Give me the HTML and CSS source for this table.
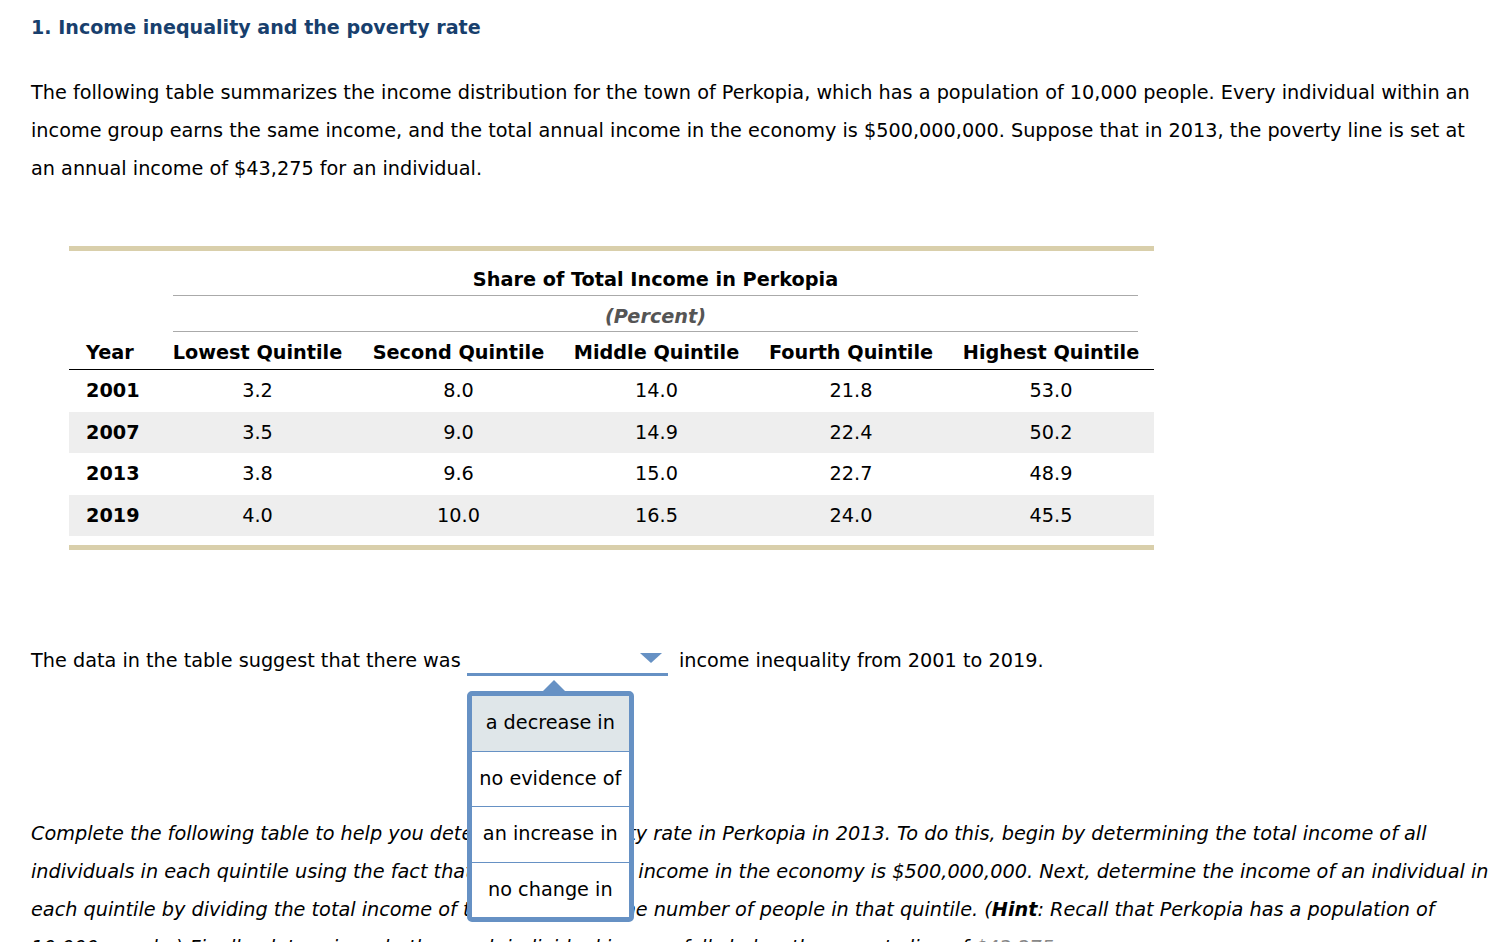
FILE: index.html
```html
<!DOCTYPE html>
<html lang="en">
<head>
<meta charset="utf-8">
<title>Income inequality and the poverty rate</title>
<link rel="stylesheet" href="styles.css">
</head>
<body>
<main class="page">
  <h1 class="title">1. Income inequality and the poverty rate</h1>
  <p class="intro">The following table summarizes the income distribution for the town of Perkopia, which has a population of 10,000 people. Every individual within an income group earns the same income, and the total annual income in the economy is $500,000,000. Suppose that in 2013, the poverty line is set at an annual income of $43,275 for an individual.</p>

  <div class="table-wrap">
    <table class="data">
      <colgroup>
        <col class="c-year"><col class="c-low"><col class="c-second"><col class="c-mid"><col class="c-fourth"><col class="c-high">
      </colgroup>
      <thead>
        <tr>
          <th></th>
          <th colspan="5" class="grp"><div class="grp-line grp-title">Share of Total Income in Perkopia</div></th>
        </tr>
        <tr>
          <th></th>
          <th colspan="5" class="grp"><div class="grp-line grp-unit">(Percent)</div></th>
        </tr>
        <tr class="cols">
          <th class="year-h">Year</th>
          <th>Lowest Quintile</th>
          <th>Second Quintile</th>
          <th>Middle Quintile</th>
          <th>Fourth Quintile</th>
          <th>Highest Quintile</th>
        </tr>
      </thead>
      <tbody>
        <tr><th class="year">2001</th><td>3.2</td><td>8.0</td><td>14.0</td><td>21.8</td><td>53.0</td></tr>
        <tr class="alt"><th class="year">2007</th><td>3.5</td><td>9.0</td><td>14.9</td><td>22.4</td><td>50.2</td></tr>
        <tr><th class="year">2013</th><td>3.8</td><td>9.6</td><td>15.0</td><td>22.7</td><td>48.9</td></tr>
        <tr class="alt"><th class="year">2019</th><td>4.0</td><td>10.0</td><td>16.5</td><td>24.0</td><td>45.5</td></tr>
      </tbody>
    </table>
  </div>

  <p class="question">The data in the table suggest that there was <span class="select"><span class="select-arrow"></span><span class="menu"><span class="menu-item is-active">a decrease in</span><span class="menu-item">no evidence of</span><span class="menu-item">an increase in</span><span class="menu-item">no change in</span></span></span> income inequality from 2001 to 2019.</p>

  <p class="instructions">Complete the following table to help you determine the poverty rate in Perkopia in 2013. To do this, begin by determining the total income of all individuals in each quintile using the fact that the total annual income in the economy is $500,000,000. Next, determine the income of an individual in each quintile by dividing the total income of that quintile by the number of people in that quintile. (<b>Hint</b>: Recall that Perkopia has a population of 10,000 people.) Finally, determine whether each individual income falls below the poverty line of <span class="muted">$43,275</span>.</p>
</main>
</body>
</html>
```

FILE: styles.css
```css
html, body {
  margin: 0;
  padding: 0;
  background: #ffffff;
}

body {
  font-family: "DejaVu Sans", Verdana, sans-serif;
  color: #000;
  font-size: 19.25px;
}

.page {
  padding: 0 25px 0 31px;
}

.title {
  margin: 0;
  padding-top: 16px;
  font-size: 19.1px;
  line-height: 24px;
  font-weight: bold;
  color: #183f6d;
}

.intro {
  margin: 34px 0 0;
  line-height: 38px;
}

.table-wrap {
  margin: 58px 0 0 38px;
  width: 1085px;
  border-top: 5px solid #d9cfab;
  border-bottom: 5px solid #d9cfab;
  padding-bottom: 9px;
}

.data {
  border-collapse: collapse;
  table-layout: fixed;
  width: 1085px;
  font-size: 19.25px;
}

.c-year { width: 88px; }
.c-low { width: 201px; }
.c-second { width: 201px; }
.c-mid { width: 195px; }
.c-fourth { width: 194px; }
.c-high { width: 206px; }

.data th,
.data td {
  padding: 0;
  line-height: 22px;
  text-align: center;
  white-space: nowrap;
}

.data .grp {
  padding: 0 16px;
}

.grp-line {
  border-bottom: 1px solid #aaaaaa;
}

.grp-title {
  padding: 18px 0 4px;
  font-weight: bold;
}

.grp-unit {
  padding: 10px 0 3px;
  font-style: italic;
  font-weight: bold;
  color: #555555;
}

.data .cols th {
  padding: 10px 0 5px;
  font-weight: bold;
  border-bottom: 1px solid #000;
}

.data .cols .year-h {
  text-align: left;
  padding-left: 17px;
}

.data tbody td,
.data tbody th {
  padding: 10px 0 9.5px;
}

.data tbody .year {
  text-align: left;
  padding-left: 17px;
  font-weight: bold;
}

.data tbody tr.alt {
  background: #eeeeee;
}

.question {
  margin: 92px 0 0;
  line-height: 38px;
}

.select {
  position: relative;
  display: inline-block;
  width: 201px;
  height: 26px;
  margin-right: 5px;
  vertical-align: -9px;
  border-bottom: 3px solid #6691c4;
}

.select-arrow {
  position: absolute;
  right: 6px;
  top: 6px;
  width: 0;
  height: 0;
  border-left: 11px solid transparent;
  border-right: 11px solid transparent;
  border-top: 10px solid #6691c4;
}

.menu {
  position: absolute;
  left: 0;
  top: 44px;
  width: 157px;
  border: 5px solid #6691c4;
  border-radius: 5px;
  background: #fff;
  display: flex;
  flex-direction: column;
  z-index: 5;
}

.menu::before {
  content: "";
  position: absolute;
  left: 71px;
  top: -16px;
  border-left: 11px solid transparent;
  border-right: 11px solid transparent;
  border-bottom: 11px solid #6691c4;
}

.menu-item {
  display: flex;
  align-items: center;
  justify-content: center;
  height: 54.5px;
  line-height: 22px;
  white-space: nowrap;
  color: #000;
}

.menu-item + .menu-item {
  border-top: 1px solid #6691c4;
}

.menu-item.is-active {
  background: #dfe6e9;
}

.instructions {
  margin: 135px -10px 0 0;
  line-height: 38px;
  font-style: italic;
}

.muted {
  color: #888;
}
```
